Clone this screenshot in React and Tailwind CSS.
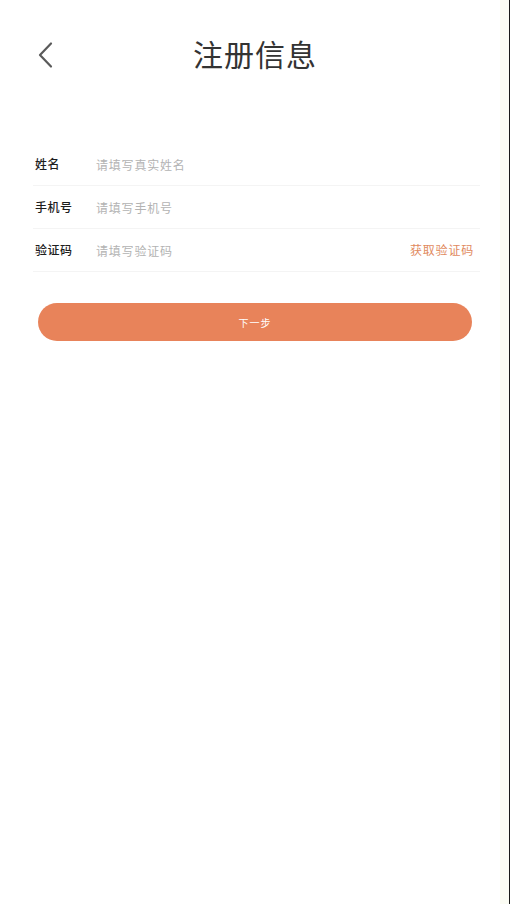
import React from "react";

export default function App() {
  const font = { fontFamily: '"Noto Sans CJK SC", "Noto Sans", sans-serif' };
  return (
    <div className="relative w-[510px] h-[904px] bg-white flex flex-col" style={font}>
      <div className="h-[110px] relative flex items-start justify-center pt-[32px]">
        <div className="absolute left-[36px] top-[41px] w-[18px] h-[28px] flex items-center">
          <svg width="18" height="28" viewBox="0 0 18 28" fill="none">
            <path d="M15 2.5 L4 14 L15 25.5" stroke="#5a5a5a" strokeWidth="2.2" strokeLinecap="round" strokeLinejoin="round" />
          </svg>
        </div>
        <h1 className="text-[30px] leading-[42px] text-[#333333] font-normal tracking-[1px]">注册信息</h1>
      </div>
      <div className="mt-[33px] ml-[33px] mr-[30px] flex flex-col">
        {[
          { label: "姓名", ph: "请填写真实姓名" },
          { label: "手机号", ph: "请填写手机号" },
          { label: "验证码", ph: "请填写验证码", code: true },
        ].map((r) => (
          <div key={r.label} className="h-[43px] flex items-center border-b border-[#f4f4f4] pl-[2px] pr-[6px]">
            <span className="w-[61px] text-[12px] text-[#1e1e1e] font-medium tracking-[0.5px]">{r.label}</span>
            <span className="flex-1 text-[12px] text-[#b3b3b3] tracking-[0.8px] pt-[2px]">{r.ph}</span>
            {r.code && (
              <span className="text-[12px] text-[#e18a60] tracking-[0.8px]">获取验证码</span>
            )}
          </div>
        ))}
      </div>
      <div className="mt-[31px] ml-[38px] w-[434px] h-[38px] rounded-full bg-[#e8835a] flex items-center justify-center">
        <span className="text-[10px] text-white tracking-[1px]">下一步</span>
      </div>
      <div className="absolute top-0 right-0 h-full w-[10px] flex">
        <div className="flex-1 bg-[#fbfcf4]" />
        <div className="w-[1px] bg-[#1a1a1a]" />
      </div>
    </div>
  );
}
